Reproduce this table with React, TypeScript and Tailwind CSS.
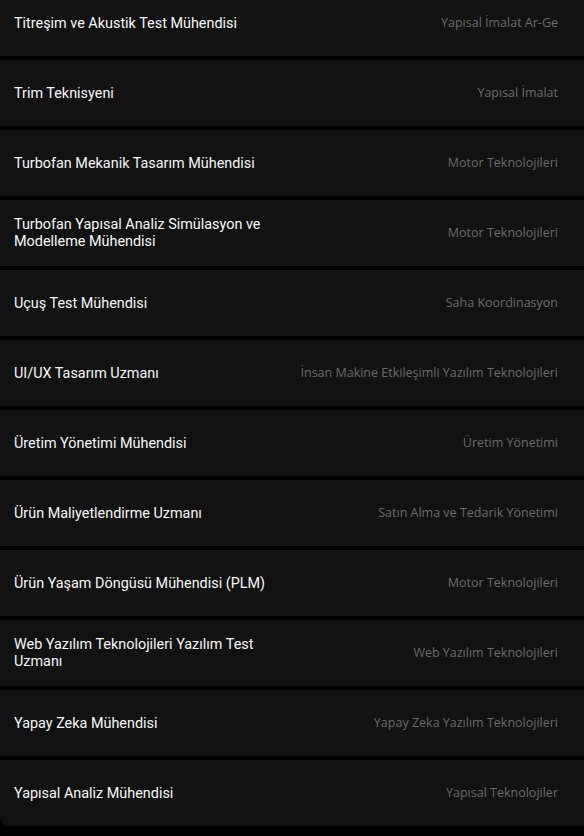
import React from 'react'

const jobs = [
  { title: 'Titreşim ve Akustik Test Mühendisi', unit: 'Yapısal İmalat Ar-Ge' },
  { title: 'Trim Teknisyeni', unit: 'Yapısal İmalat' },
  { title: 'Turbofan Mekanik Tasarım Mühendisi', unit: 'Motor Teknolojileri' },
  { title: 'Turbofan Yapısal Analiz Simülasyon ve Modelleme Mühendisi', unit: 'Motor Teknolojileri' },
  { title: 'Uçuş Test Mühendisi', unit: 'Saha Koordinasyon' },
  { title: 'UI/UX Tasarım Uzmanı', unit: 'İnsan Makine Etkileşimli Yazılım Teknolojileri' },
  { title: 'Üretim Yönetimi Mühendisi', unit: 'Üretim Yönetimi' },
  { title: 'Ürün Maliyetlendirme Uzmanı', unit: 'Satın Alma ve Tedarik Yönetimi' },
  { title: 'Ürün Yaşam Döngüsü Mühendisi (PLM)', unit: 'Motor Teknolojileri' },
  { title: 'Web Yazılım Teknolojileri Yazılım Test Uzmanı', unit: 'Web Yazılım Teknolojileri' },
  { title: 'Yapay Zeka Mühendisi', unit: 'Yapay Zeka Yazılım Teknolojileri' },
  { title: 'Yapısal Analiz Mühendisi', unit: 'Yapısal Teknolojiler' },
]

const App = () => {
  return (
    <div className="h-[836px] overflow-hidden bg-black">
      {/* list is scrolled, first row cut off */}
      <div className="-mt-[10px] flex flex-col gap-[4px]">
        {jobs.map((job, index) => (
          <div
            key={index}
            className={
              index === jobs.length - 1
                ? 'flex h-[66px] items-center justify-between rounded-bl-[10px] bg-[#121212] pl-[14px] pr-[26px]'
                : 'flex h-[66px] items-center justify-between bg-[#121212] pl-[14px] pr-[26px]'
            }
          >
            <div className="w-[272px] font-['Roboto',sans-serif] text-[14.4px] font-normal leading-[17px] text-[#f7f7f7]">
              {job.title}
            </div>
            <div className="font-['Open_Sans',sans-serif] text-[12.5px] text-[#6b6b6b]">{job.unit}</div>
          </div>
        ))}
      </div>
    </div>
  )
}

export default App
